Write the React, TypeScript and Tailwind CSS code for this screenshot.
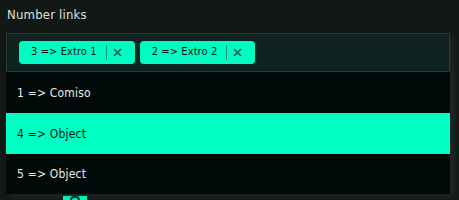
import React from "react";

const font = { fontFamily: '"DejaVu Sans Condensed", "DejaVu Sans", "Noto Sans", sans-serif' };

function Chip({ label }: { label: string }) {
  return (
    <div className="flex h-[23px] items-center rounded-[4px] bg-[#00fcc2] pl-[12px] pr-[13px] text-[11px] tracking-[0.1px] text-[#06140f]">
      <span>{label}</span>
      <span className="ml-[9px] h-[15px] w-px bg-[#1f8f72]" />
      <svg className="ml-[6px]" width="9" height="9" viewBox="0 0 9 9">
        <path d="M1 1 L8 8 M8 1 L1 8" stroke="#12604d" strokeWidth="1.7" />
      </svg>
    </div>
  );
}

export default function App() {
  const rows = [
    { t: "1 => Comiso", a: false },
    { t: "4 => Object", a: true },
    { t: "5 => Object", a: false },
  ];
  return (
    <div className="relative h-[200px] w-[459px] overflow-hidden bg-[#111816]" style={font}>
      <div className="px-[7px] pt-[6px] text-[13px] leading-[17px] tracking-[0.2px] text-[#d9e2de]">
        Number links
      </div>
      <div className="ml-[6px] mt-[10px] w-[444px] rounded-[2px] shadow-[5px_4px_6px_rgba(60,66,64,0.35)]">
        <div className="flex h-[39px] gap-[5px] border border-[#2c3a36] bg-[#0f2420] pl-[12px] pt-[7px]">
          <Chip label="3 => Extro 1" />
          <Chip label="2 => Extro 2" />
        </div>
        {rows.map((r, i) => (
          <div
            key={i}
            className={`flex items-center pl-[11px] text-[12px] tracking-[0.2px] ${
              i === 2 ? "h-[40px]" : "h-[41px]"
            } ${r.a ? "bg-[#00ffc3] text-[#031410]" : "bg-[#010a08] text-[#e6eeea]"}`}
          >
            {r.t}
          </div>
        ))}
      </div>
      <div className="absolute left-[63px] top-[196px] flex h-[6px] w-[24px] items-start justify-center bg-[#00f0b8]">
        <div className="h-[5px] w-[10px] rounded-t-[4px] border-[2px] border-b-0 border-[#0a3b30]" />
      </div>
    </div>
  );
}
